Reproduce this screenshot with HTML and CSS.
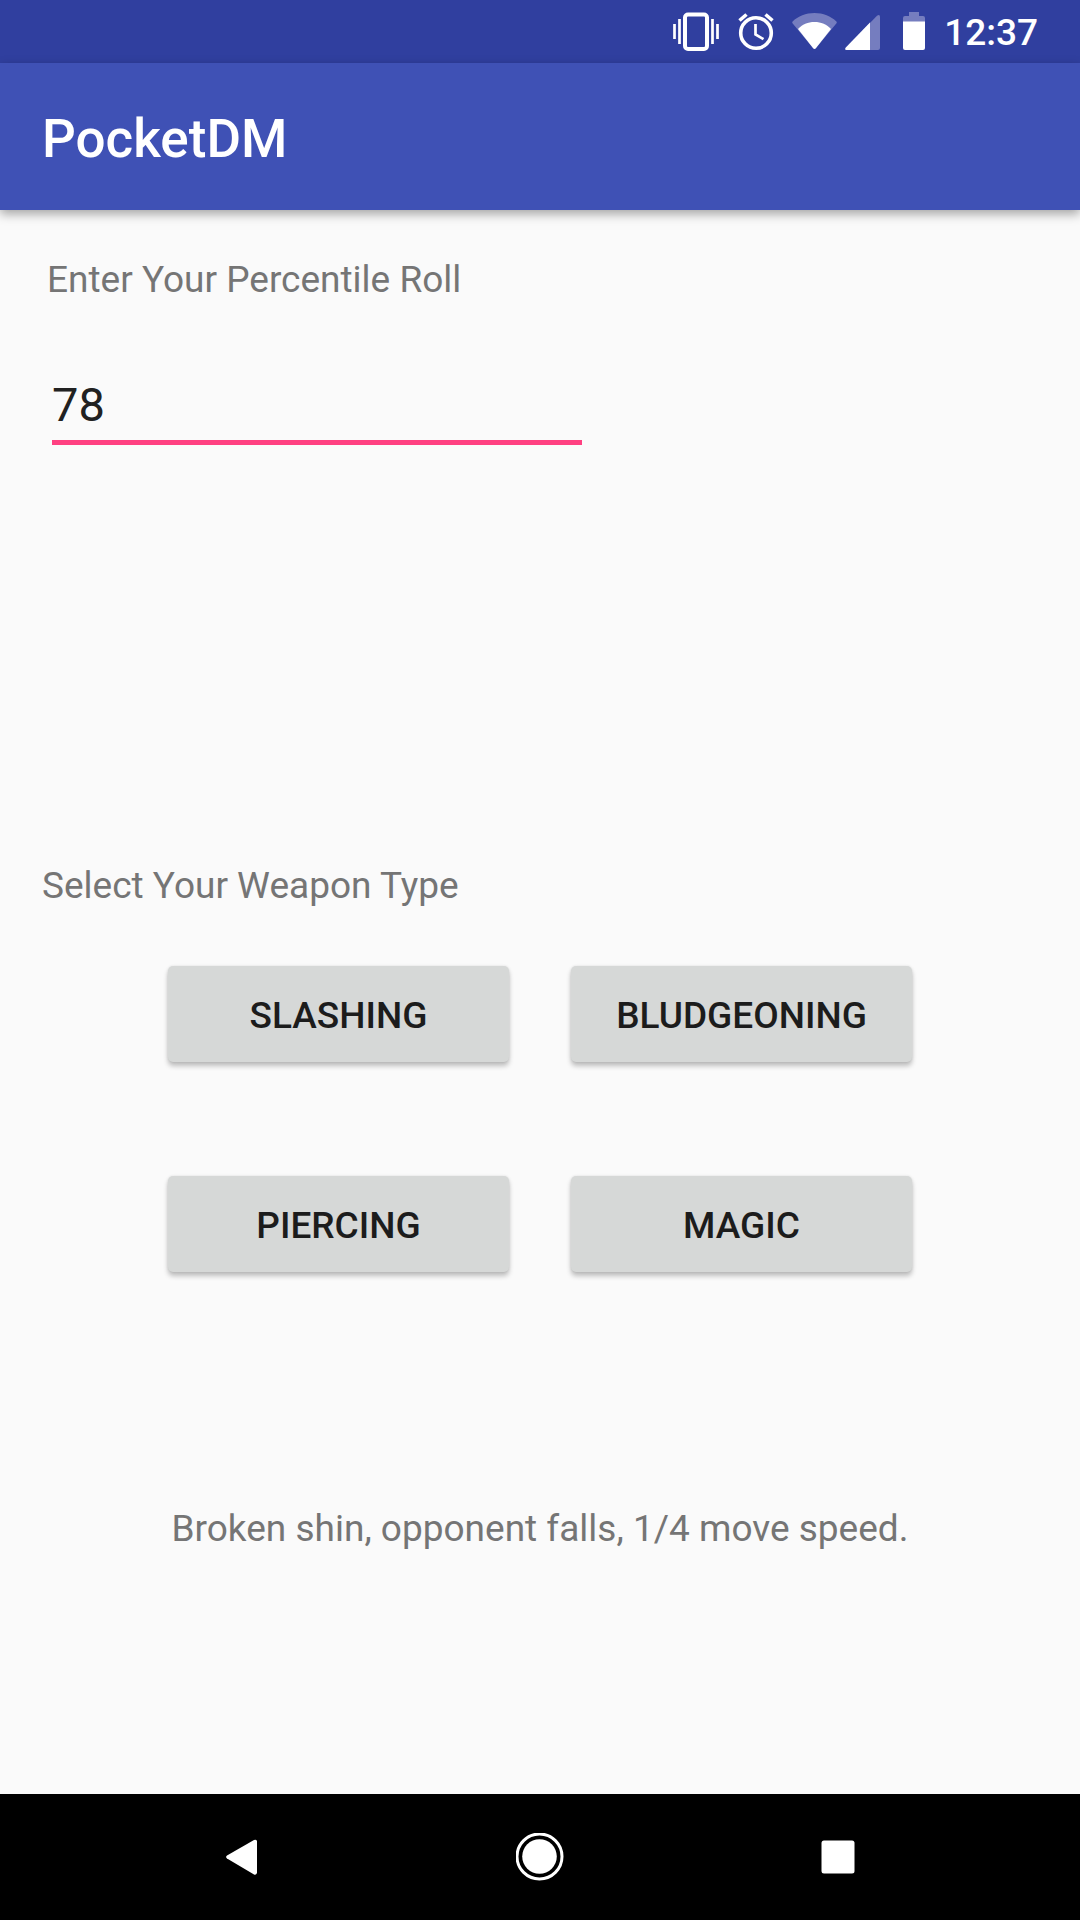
FILE: index.html
```html
<!DOCTYPE html>
<html lang="en">
<head>
<meta charset="utf-8">
<meta name="viewport" content="width=device-width, initial-scale=1">
<title>PocketDM</title>
<link rel="stylesheet" href="styles.css">
</head>
<body>
<div class="status-bar">
  <svg class="status-icon" width="47" height="40" viewBox="0 0 47 40" aria-hidden="true">
    <rect x="12" y="2.5" width="22" height="34.5" rx="3" fill="none" stroke="#fff" stroke-width="4"/>
    <path d="M1.5 12v15M6.5 7v25M39.500 7v25M44.500 12v15" stroke="#fff" stroke-width="2.700" fill="none"/>
  </svg>
  <svg class="status-icon" width="36" height="40" viewBox="0 0 36 40" aria-hidden="true">
    <circle cx="18" cy="21" r="15.300" fill="none" stroke="#fff" stroke-width="3.600"/>
    <path d="M1.500 8.500L8.500 2.500M34.500 8.500L27.500 2.500" stroke="#fff" stroke-width="3.600" fill="none"/>
    <path d="M17.500 12v10.500l8 4.700" stroke="#fff" stroke-width="2.700" fill="none"/>
  </svg>
  <div class="network">
    <svg class="status-icon" width="45" height="40" viewBox="0 0 45 40" aria-hidden="true">
      <path d="M.6 9.600C6 4 14 1 22.500 1s16.500 3 21.900 8.600q.8 1-.1 2L24 36q-1.500 1.800-3 0L.7 11.600q-.9-1-.1-2z" fill="#757dbf"/>
      <path d="M6 17C10 12.500 16 10 22.500 10S35 12.500 39 17L24 36q-1.500 1.800-3 0z" fill="#fff"/>
    </svg>
    <svg class="status-icon" width="35" height="40" viewBox="0 0 35 40" aria-hidden="true">
      <path d="M1 35.500L32 3.700q3-2 3 1.300v31q0 2-2 2H1.500Q-.5 38 1 35.500z" fill="#757dbf"/>
      <path d="M.6 35.800L25 10.500V38H1.500Q-.5 38 .6 35.800z" fill="#fff"/>
    </svg>
  </div>
  <svg class="status-icon" width="28" height="40" viewBox="0 0 28 40" aria-hidden="true">
    <path d="M5 10V6q0-2 2-2h4V0h10v4h4q2 0 2 2v4z" fill="#757dbf"/>
    <path d="M5 9.500h22V36q0 2-2 2H7q-2 0-2-2z" fill="#fff"/>
  </svg>
  <time class="clock">12:37</time>
</div>
<header class="app-bar"><h1 class="app-title">PocketDM</h1></header>
<main class="content">
  <form class="roll-form">
    <label class="label roll-label" for="roll">Enter Your Percentile Roll</label>
    <input class="roll-input" id="roll" name="roll" type="text" inputmode="numeric" value="78">
    <p class="label weapon-label" id="weapon-label">Select Your Weapon Type</p>
    <div class="weapons" role="group" aria-labelledby="weapon-label">
      <button class="weapon" type="button">SLASHING</button>
      <button class="weapon" type="button">BLUDGEONING</button>
      <button class="weapon" type="button">PIERCING</button>
      <button class="weapon" type="button">MAGIC</button>
    </div>
    <output class="label result" for="roll">Broken shin, opponent falls, 1/4 move speed.</output>
  </form>
</main>
<nav class="nav-bar">
  <button class="nav-button" type="button" aria-label="Back">
    <svg width="48" height="48" viewBox="0 0 48 48"><path d="M39 8v32q-1 2.500-3 1.500L9 25.500q-1.800-1.500 0-3L36 7q2-1 3 1z" fill="#fff"/></svg>
  </button>
  <button class="nav-button" type="button" aria-label="Home">
    <svg width="48" height="48" viewBox="0 0 48 48"><circle cx="23.500" cy="23.500" r="22.500" fill="none" stroke="#fff" stroke-width="3"/><circle cx="23.500" cy="23.500" r="17.300" fill="#fff"/></svg>
  </button>
  <button class="nav-button" type="button" aria-label="Overview">
    <svg width="48" height="48" viewBox="0 0 48 48"><rect x="7.500" y="7.500" width="33" height="33" rx="2.500" fill="#fff"/></svg>
  </button>
</nav>
</body>
</html>
```
FILE: styles.css
```css
* {
  box-sizing: border-box;
}

body {
  display: flex;
  flex-direction: column;
  min-height: 100vh;
  margin: 0;
  background: #fafafa;
  font-family: Roboto, "Liberation Sans", sans-serif;
}

button,
input {
  font-family: inherit;
}

.status-bar {
  display: flex;
  align-items: center;
  justify-content: flex-end;
  gap: 18px;
  height: 63px;
  padding-right: 42px;
  background: #303f9f;
  color: #fff;
}

.status-icon {
  display: block;
  flex: none;
}

.network {
  display: flex;
  gap: 8px;
}

.clock {
  padding-top: 2px;
  font-size: 37px;
  font-weight: 500;
  line-height: 44px;
}

.app-bar {
  display: flex;
  align-items: center;
  height: 147px;
  padding: 4px 42px 0;
  background: #3f51b5;
  color: #fff;
  box-shadow: 0 4px 10px rgba(0, 0, 0, 0.35);
}

.app-title {
  margin: 0;
  font-size: 53px;
  font-weight: 500;
  line-height: 62px;
}

.content {
  flex: 1;
  padding: 48px 42px;
}

.roll-form {
  display: flex;
  flex-direction: column;
}

.label {
  margin: 0;
  color: #757575;
  font-size: 37px;
  line-height: 44px;
}

.roll-label {
  padding-left: 5px;
}

.roll-input {
  width: 530px;
  max-width: 100%;
  height: 68px;
  margin: 75px 10px 0;
  padding: 0 0 9px;
  border: 0;
  border-bottom: 5px solid #ff4081;
  border-radius: 0;
  outline: 0;
  background: transparent;
  color: #212121;
  font-size: 47px;
  line-height: 54px;
}

.weapon-label {
  margin-top: 419px;
}

.weapons {
  display: grid;
  grid-template-columns: repeat(2, 341px);
  justify-content: center;
  gap: 114px 62px;
  margin-top: 58px;
}

.weapon {
  height: 96px;
  padding: 2px 0 0;
  border: 0;
  border-radius: 5px;
  background: #d6d8d7;
  box-shadow: 0 4px 5px rgba(0, 0, 0, 0.24), 0 0 3px rgba(0, 0, 0, 0.1);
  color: #1c1c1c;
  font-size: 37px;
  font-weight: 500;
}

.result {
  margin-top: 235px;
  text-align: center;
}

.nav-bar {
  display: grid;
  grid-template-columns: repeat(3, 298px);
  justify-content: center;
  height: 126px;
  background: #000;
}

.nav-button {
  display: flex;
  align-items: center;
  justify-content: center;
  padding: 0;
  border: 0;
  background: transparent;
}
```
